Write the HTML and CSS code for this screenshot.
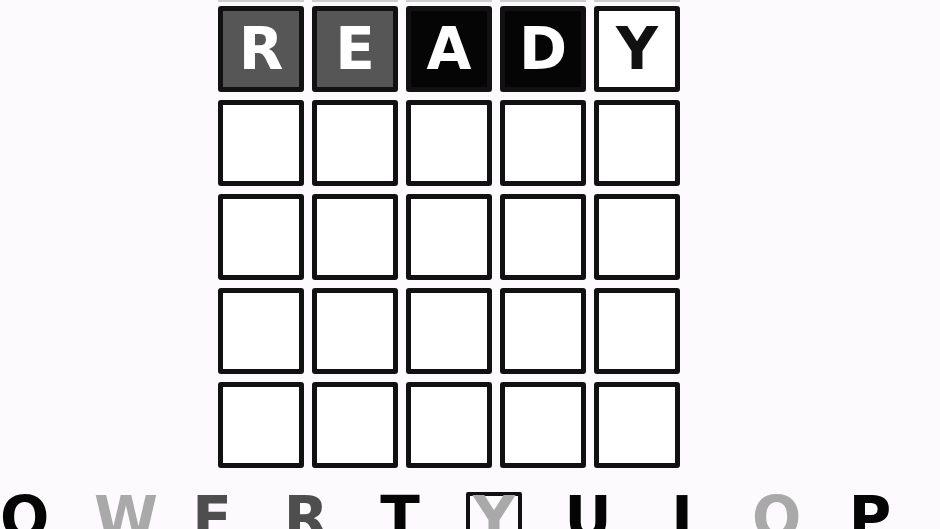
FILE: index.html
```html
<!DOCTYPE html>
<html lang="en">
<head>
<meta charset="utf-8">
<title>Ready</title>
<link rel="stylesheet" href="styles.css">
</head>
<body>
<div class="screen">
  <div class="board">
    <div class="edge-row">
      <span class="edge"></span><span class="edge"></span><span class="edge"></span><span class="edge"></span><span class="edge"></span>
    </div>
    <div class="grid">
      <div class="cell gray">R</div>
      <div class="cell gray">E</div>
      <div class="cell black">A</div>
      <div class="cell black">D</div>
      <div class="cell">Y</div>
      <div class="cell"></div><div class="cell"></div><div class="cell"></div><div class="cell"></div><div class="cell"></div>
      <div class="cell"></div><div class="cell"></div><div class="cell"></div><div class="cell"></div><div class="cell"></div>
      <div class="cell"></div><div class="cell"></div><div class="cell"></div><div class="cell"></div><div class="cell"></div>
      <div class="cell"></div><div class="cell"></div><div class="cell"></div><div class="cell"></div><div class="cell"></div>
    </div>
  </div>
  <div class="keyboard">
    <div class="key">Q</div>
    <div class="key light">W</div>
    <div class="key mid">E</div>
    <div class="key mid">R</div>
    <div class="key">T</div>
    <div class="key light selected">Y</div>
    <div class="key">U</div>
    <div class="key">I</div>
    <div class="key light">O</div>
    <div class="key">P</div>
  </div>
</div>
</body>
</html>
```
FILE: styles.css
```css
html, body {
  margin: 0;
  padding: 0;
  background: #fcfafc;
  overflow: hidden;
}
.screen {
  width: 940px;
  height: 529px;
  overflow: hidden;
  font-family: "DejaVu Sans", "Liberation Sans", sans-serif;
  font-weight: bold;
}
.board {
  margin-left: 218px;
  width: 462px;
}
.edge-row {
  display: flex;
  gap: 8px;
  height: 2px;
  margin-bottom: 4px;
}
.edge {
  width: 86px;
  height: 2px;
  background: #cdcdcd;
}
.grid {
  display: grid;
  grid-template-columns: repeat(5, 86px);
  grid-auto-rows: 86px;
  gap: 8px;
}
.cell {
  box-sizing: border-box;
  border: 5px solid #111;
  border-radius: 3px;
  background: #fff;
  display: flex;
  align-items: center;
  justify-content: center;
  font-size: 58px;
  line-height: 58px;
  color: #111;
}
.cell.gray {
  background: #565656;
  color: #fff;
}
.cell.black {
  background: #050505;
  color: #fff;
}
.keyboard {
  display: flex;
  gap: 38px;
  margin-left: -4px;
  margin-top: 24px;
}
.key {
  box-sizing: border-box;
  width: 56px;
  height: 60px;
  border: 4px solid transparent;
  border-radius: 2px;
  text-align: center;
  font-size: 58px;
  line-height: 44px;
  color: #050505;
  flex: none;
}
.key.light {
  color: #a9a9a9;
}
.key.mid {
  color: #4e4e4e;
}
.key.selected {
  border-color: #111;
}
```
